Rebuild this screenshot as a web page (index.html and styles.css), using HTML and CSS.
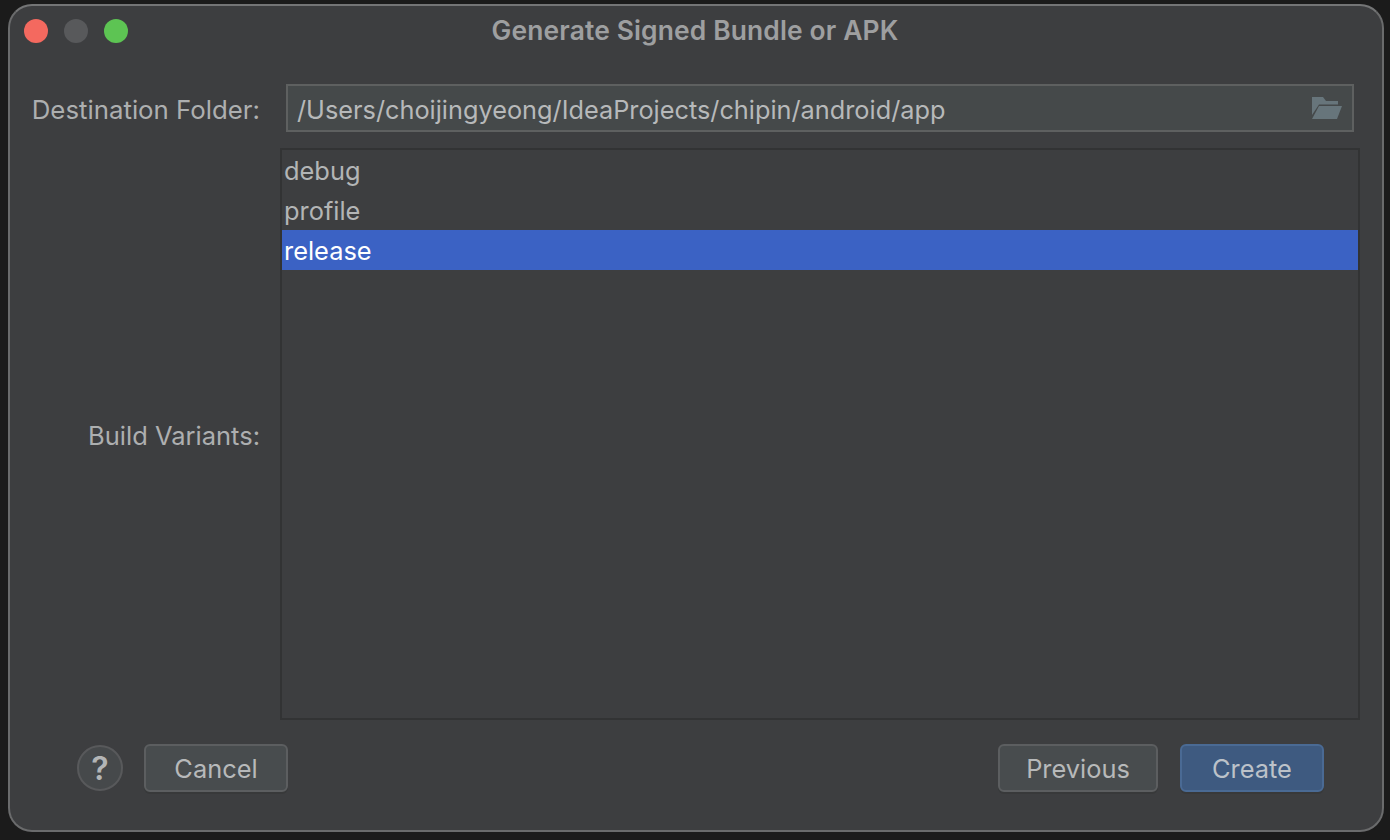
FILE: index.html
```html
<!DOCTYPE html>
<html lang="en">
<head>
  <meta charset="UTF-8">
  <title>Generate Signed Bundle or APK</title>
  <link rel="stylesheet" href="styles.css">
</head>
<body>
  <div class="window">
    <div class="titlebar">
      <div class="lights">
        <span class="light red"></span>
        <span class="light grey"></span>
        <span class="light green"></span>
      </div>
      <div class="title">Generate Signed Bundle or APK</div>
    </div>

    <div class="form">
      <label class="label">Destination Folder:</label>
      <div class="field">
        <span class="path">/Users/choijingyeong/IdeaProjects/chipin/android/app</span>
        <svg class="folder" width="30" height="22" viewBox="0 0 30 22">
          <path fill="#67757b" d="M0 0h11l3 4h12v3.500H7L0 18z"/>
          <path fill="#67757b" d="M7 9h23l-5 13H0z"/>
        </svg>
      </div>

      <label class="label variants-label">Build Variants:</label>
      <ul class="variants">
        <li>debug</li>
        <li>profile</li>
        <li class="selected">release</li>
      </ul>
    </div>

    <div class="footer">
      <button class="help">?</button>
      <button class="btn cancel">Cancel</button>
      <div class="spacer"></div>
      <button class="btn previous">Previous</button>
      <button class="btn primary">Create</button>
    </div>
  </div>
</body>
</html>
```

FILE: styles.css
```css
html, body { margin: 0; height: 100%; }
body { background: #1b1b1b; font-family: Inter, "Liberation Sans", sans-serif; color: #b3b5b6; overflow: hidden; }

.window { box-sizing: border-box; width: 1376px; height: 828px; margin: 4px 0 0 8px; background: #3d3e40; border: 2px solid #6a6b6c; border-top-color: #747576; border-radius: 24px; display: flex; flex-direction: column; }

.titlebar { display: flex; align-items: center; height: 50px; position: relative; flex-shrink: 0; }
.lights { display: flex; gap: 16px; margin-left: 14px; }
.light { width: 24px; height: 24px; border-radius: 50%; }
.red { background: #f4695f; }
.grey { background: #58595b; }
.green { background: #5dc453; }
.title { position: absolute; left: 0; right: 0; top: 0; line-height: 49px; padding-left: 1px; padding-right: 3px; text-align: center; font-size: 26.400px; font-weight: 600; color: #9e9fa0; letter-spacing: 0.150px; }

.form { display: grid; grid-template-columns: 250px 1fr; grid-template-rows: 48px 572px; row-gap: 16px; margin-top: 28px; padding-right: 22px; }
.label { font-size: 25.800px; padding-top: 2px; text-align: right; align-self: center; color: #adafb0; }
.variants-label { font-size: 25.500px; }

.field { box-sizing: border-box; margin-left: 26px; margin-right: 6px; height: 48px; background: #45494a; border: 2px solid #5e6060; display: flex; align-items: center; justify-content: space-between; padding: 0 10px 0 9px; }
.path { font-size: 25.300px; padding-top: 2px; color: #b7b9ba; }

.variants { box-sizing: border-box; list-style: none; margin: 0 0 0 20px; padding: 0; border: 2px solid #323334; }
.variants li { height: 40px; line-height: 42px; padding-left: 2px; font-size: 25.400px; color: #b3b5b6; }
.variants li.selected { background: #3b62c4; color: #fff; }

.footer { display: flex; align-items: center; gap: 22px; margin-top: 24px; padding: 0 58px 0 67px; }
.spacer { flex: 1; }
.btn { box-sizing: border-box; width: 144px; height: 48px; background: #484c4e; border: 2px solid #5c5e60; border-radius: 6px; color: #b7b9ba; font: 25.400px/46px Inter, "Liberation Sans", sans-serif; box-shadow: 0 2px 0 #38393a; padding: 0; }
.cancel { margin-left: -1px; }
.previous { width: 160px; }
.primary { background: #3e5a80; border-color: #4a6a94; color: #bcc2c9; }
.help { box-sizing: border-box; width: 46px; height: 46px; border-radius: 50%; background: #46494b; border: 2px solid #58595b; color: #b3b5b6; font: 600 32px Inter, "Liberation Sans", sans-serif; padding: 0; }
```
